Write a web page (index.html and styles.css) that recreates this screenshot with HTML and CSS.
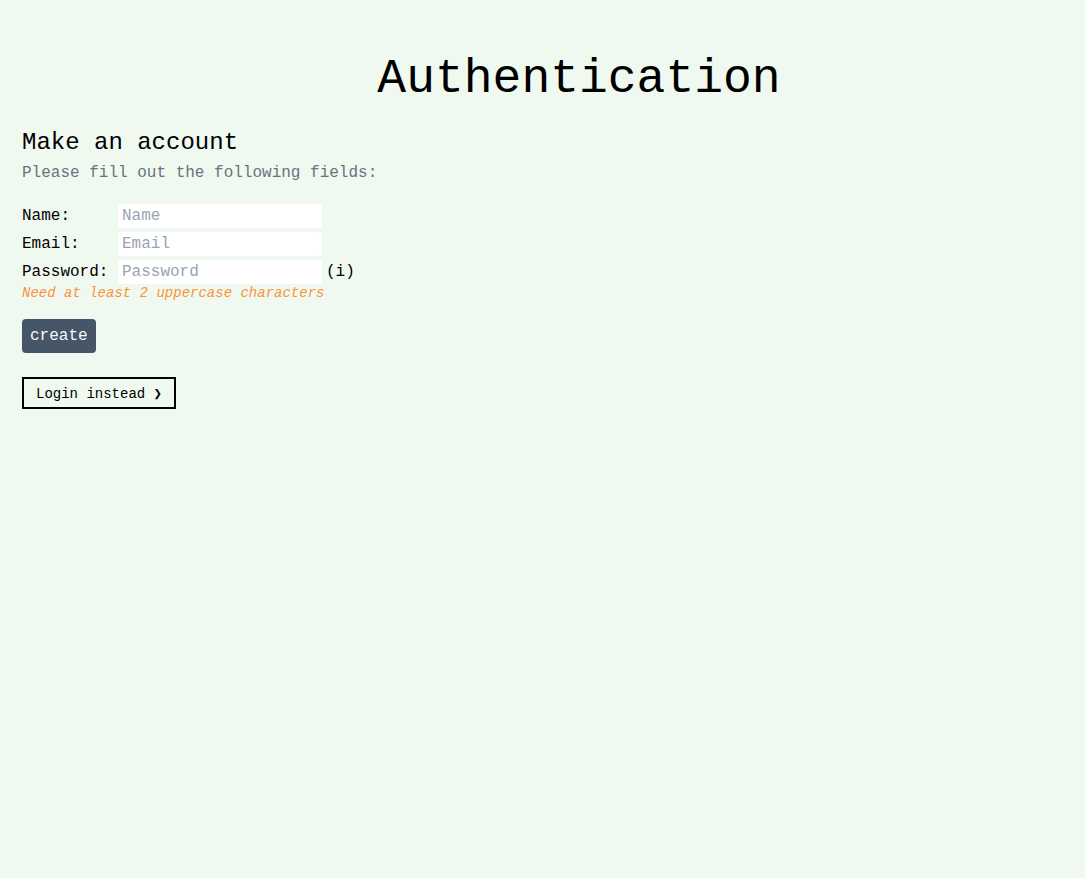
FILE: index.html
```html
<!DOCTYPE html>
<html lang="en">
<head>
<meta charset="utf-8">
<title>Authentication</title>
<link rel="stylesheet" href="styles.css">
</head>
<body>
<div class="page">
  <h1 class="title">Authentication</h1>
  <section class="auth">
    <h2 class="auth-heading">Make an account</h2>
    <p class="auth-sub">Please fill out the following fields:</p>
    <form class="auth-form">
      <div class="field-grid">
        <label class="field-label" for="name">Name:</label>
        <div class="field-control"><input class="field-input" id="name" type="text" placeholder="Name"></div>
        <label class="field-label" for="email">Email:</label>
        <div class="field-control"><input class="field-input" id="email" type="email" placeholder="Email"></div>
        <label class="field-label" for="password">Password:</label>
        <div class="field-control"><input class="field-input" id="password" type="password" placeholder="Password"><span class="field-info">(i)</span></div>
      </div>
      <p class="field-hint">Need at least 2 uppercase characters</p>
      <button class="btn-create" type="button">create</button>
    </form>
    <button class="btn-switch" type="button">Login instead ❯</button>
  </section>
</div>
</body>
</html>
```

FILE: styles.css
```css
html, body {
  margin: 0;
  padding: 0;
}
body {
  background: #f0f9ef;
  font-family: "Liberation Mono", "DejaVu Sans Mono", monospace;
  color: #000;
  min-height: 100vh;
}
.page {
  padding: 0 22px;
}
.title {
  margin: 0;
  padding: 51px 0 0 73px;
  text-align: center;
  font-size: 48px;
  font-weight: 400;
  line-height: 56px;
}
.auth-heading {
  margin: 20px 0 0;
  font-size: 24px;
  font-weight: 400;
  line-height: 32px;
}
.auth-sub {
  margin: 2px 0 0;
  font-size: 16px;
  line-height: 24px;
  color: #6b7280;
}
.auth-form {
  margin-top: 19px;
}
.field-grid {
  display: grid;
  grid-template-columns: 96px auto;
  row-gap: 4px;
  align-items: center;
  justify-content: start;
}
.field-label {
  font-size: 16px;
  line-height: 24px;
}
.field-control {
  display: flex;
  align-items: center;
  gap: 4px;
}
.field-input {
  box-sizing: border-box;
  width: 204px;
  height: 24px;
  border: none;
  border-radius: 4px;
  background: #fff;
  padding: 0 4px;
  font-family: inherit;
  font-size: 16px;
  color: #000;
  outline: none;
}
.field-input::placeholder {
  color: #9ca3af;
}
.field-info {
  font-size: 16px;
  line-height: 24px;
}
.field-hint {
  margin: -1px 0 0;
  font-size: 14px;
  line-height: 20px;
  font-style: italic;
  color: #fb923c;
}
.btn-create {
  margin-top: 16px;
  display: block;
  box-sizing: border-box;
  height: 34px;
  padding: 0 8px;
  border: none;
  border-radius: 4px;
  background: #475569;
  color: #f8fafc;
  font-family: inherit;
  font-size: 16px;
}
.btn-switch {
  margin-top: 24px;
  display: block;
  box-sizing: border-box;
  height: 32px;
  padding: 0 12px;
  border: 2px solid #000;
  border-radius: 0;
  background: transparent;
  color: #000;
  font-family: inherit;
  font-size: 14px;
}
```
